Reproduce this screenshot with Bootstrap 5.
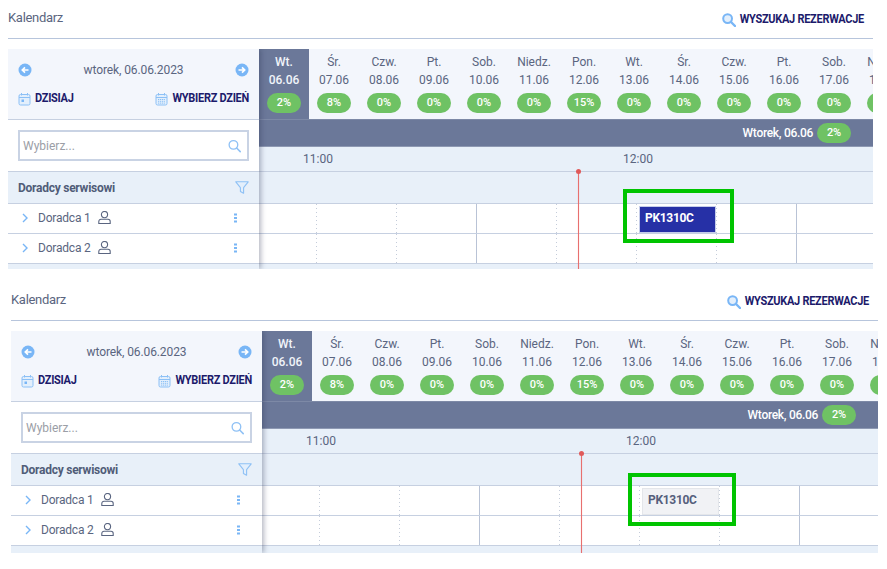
<!DOCTYPE html>
<html lang="pl">
<head>
    <meta charset="UTF-8">
    <meta name="viewport" content="width=device-width, initial-scale=1.0">
    <title>Kalendarz</title>
    <link rel="stylesheet" href="https://cdn.jsdelivr.net/npm/bootstrap@5.3.1/dist/css/bootstrap.min.css">
    <style>
        body { margin: 0; background: #fff; font-family: Roboto, "Liberation Sans", sans-serif; color: #5a6580; overflow: hidden; }

        .cal-panel { position: relative; }
        .panel-a { width: 865px; margin-left: 8px; }
        .panel-b { width: 867px; margin-left: 11px; margin-top: 13px; }
        .panel-a .cal-wrap { height: 220px; }
        .panel-b .cal-wrap { height: 222px; }

        .cal-title { height: 39px; border-bottom: 1px solid #b7c5dc; margin-bottom: 10px; padding: 8px 9px 0 0; }
        .cal-title-text { font-size: 13px; letter-spacing: -.3px; color: #5a6580; }
        .cal-title .caps-link { margin-top: 4px; }
        .caps-link { font-size: 11px; font-weight: 700; color: #1c1a6b; letter-spacing: -.28px; white-space: nowrap; }
        .caps-link span { display: inline-block; transform: scaleY(1.12); }

        .cal-side { width: 251px; flex: none; position: relative; z-index: 2; background: #fff; box-shadow: 2px 0 5px rgba(40, 50, 80, .35); }
        .side-top { height: 71px; background: #f3f6fc; border-bottom: 1px solid #c6d0e1; padding: 12px 10px 0 10px; }
        .side-date { font-size: 12px; letter-spacing: -.1px; }
        .side-links { margin-top: 12px; }
        .side-search { height: 51px; padding: 10px 10px 0 10px; }
        .search-box { height: 31px; border: 2px solid #c9d3e4; padding-right: 6px; }
        .search-box .form-control { font-size: 12px; padding: 0 3px; box-shadow: none; background: transparent; }
        .search-box .form-control::placeholder { color: #9b9ea6; }
        .side-head { height: 33px; background: #e8f0f9; border-top: 1px solid #c6d0e1; border-bottom: 1px solid #c6d0e1; padding: 0 10px; font-size: 12px; letter-spacing: -.25px; font-weight: 700; color: #505c78; }
        .side-row { height: 30px; border-bottom: 1px solid #c6d0e1; padding: 0 22px 2px 14px; font-size: 12px; letter-spacing: -.2px; color: #5a6580; }
        .side-row .row-name { margin-left: 10px; margin-right: 7px; }
        .side-foot { height: 10px; background: #e8f0f9; }

        .cal-main { flex: 1 1 auto; min-width: 0; overflow: hidden; position: relative; background: #fff; }
        .day-strip { height: 70px; background: #f3f6fc; }
        .day-cell { width: 50px; flex: none; padding-top: 4px; font-size: 12px; line-height: 18px; color: #5a6580; text-align: center; }
        .day-cell.is-today { background: #6b7899; color: #f1f4f9; font-weight: 500; }
        .load-pill { display: inline-block; width: 34px; height: 20px; line-height: 20px; border-radius: 10px; background: #6fc264; color: #fff; font-size: 11px; font-weight: 500; text-align: center; }
        .day-cell .load-pill { margin-top: 4px; }
        .day-bar { height: 28px; background: #6b7899; border-top: 1px solid #7d89a6; border-bottom: 1px solid #8e99b3; padding-right: 22px; color: #fff; font-size: 12px; letter-spacing: -.3px; font-weight: 500; gap: 4px; }
        .time-row { height: 24px; background: #e8f0f9; font-size: 12px; line-height: 24px; color: #5a6580; padding-left: 44px; }
        .time-cell { width: 320px; flex: none; }
        .head-row { height: 33px; background: #e8f0f9; border-top: 1px solid #c6d0e1; border-bottom: 1px solid #c6d0e1; }
        .grid-row { height: 30px; border-bottom: 1px solid #c6d0e1; position: relative; }
        .grid-cell { width: 80px; flex: none; background: repeating-linear-gradient(to bottom, #c4ccda 0 1px, transparent 1px 4px) right top / 1px 100% no-repeat; }
        .grid-cell.first { width: 58px; }
        .grid-cell.hour { background: linear-gradient(#b9c3d6, #b9c3d6) right top / 1px 100% no-repeat; }
        .grid-foot { height: 10px; background: #e8f0f9; }

        .now-line { position: absolute; left: 319px; top: 122px; bottom: 0; width: 1px; background: #e8706f; box-shadow: 0 0 1px rgba(232, 112, 111, .6); z-index: 1; }
        .now-line::before { content: ""; position: absolute; left: -2px; top: -2px; width: 5px; height: 5px; border-radius: 50%; background: #e05a5a; }

        .res-chip { position: absolute; left: 380px; top: 2px; width: 77px; height: 27px; padding-left: 5px; font-size: 12px; font-weight: 700; line-height: 23px; letter-spacing: -.3px; }
        .chip-on { background: #2630a6; color: #fff; border: 1px solid #c5cdea; }
        .chip-off { background: #f1f2f5; color: #565f7c; border: 1px solid #e4e6ea; }

        .hl-frame { position: absolute; border: 4px solid #00c400; z-index: 3; }
        .panel-a .hl-frame { left: 615px; top: 189px; width: 111px; height: 54px; }
        .panel-b .hl-frame { left: 617px; top: 191px; width: 108px; height: 53px; }
    </style>
</head>
<body>

<div id="panels"></div>

<script>
const days = [
    ["Wt.", "06.06", 2], ["Śr.", "07.06", 8], ["Czw.", "08.06", 0], ["Pt.", "09.06", 0],
    ["Sob.", "10.06", 0], ["Niedz.", "11.06", 0], ["Pon.", "12.06", 15], ["Wt.", "13.06", 0],
    ["Śr.", "14.06", 0], ["Czw.", "15.06", 0], ["Pt.", "16.06", 0], ["Sob.", "17.06", 0],
    ["Niedz.", "18.06", 0]
];

const icons = {
    left: `<svg width="14" height="14" viewBox="0 0 14 14"><circle cx="7" cy="7" r="6.5" fill="#79b6f6"/><path d="M10.5 7H4.5M7 4.3 4.3 7 7 9.7" fill="none" stroke="#fff" stroke-width="1.7"/></svg>`,
    right: `<svg width="14" height="14" viewBox="0 0 14 14"><circle cx="7" cy="7" r="6.5" fill="#79b6f6"/><path d="M3.5 7H9.5M7 4.3 9.7 7 7 9.7" fill="none" stroke="#fff" stroke-width="1.7"/></svg>`,
    today: `<svg width="13" height="14" viewBox="0 0 13 14"><rect x="1" y="2.5" width="11" height="10.5" rx="1.5" fill="#e3effc" stroke="#8cc0f6"/><path d="M1 5.5h11M3.5 1v2.5M9.5 1v2.5" stroke="#8cc0f6" fill="none"/><rect x="3.5" y="7.5" width="2.5" height="2.5" fill="#79b6f6"/></svg>`,
    month: `<svg width="13" height="14" viewBox="0 0 13 14"><rect x="1" y="2.5" width="11" height="10.5" rx="1.5" fill="#e3effc" stroke="#8cc0f6"/><path d="M1 5.5h11M3.5 1v2.5M9.5 1v2.5" stroke="#8cc0f6" fill="none"/><path d="M3 7.5h7M3 9.3h7M3 11.1h7" stroke="#8cc0f6" stroke-dasharray="1.2 .7" fill="none"/></svg>`,
    search: `<svg width="14" height="14" viewBox="0 0 14 14"><circle cx="5.8" cy="5.8" r="4.6" fill="none" stroke="#8fc1f5" stroke-width="1.4"/><path d="M9.2 9.2 13 13" stroke="#8fc1f5" stroke-width="1.6" stroke-linecap="round"/></svg>`,
    searchBold: `<svg width="14" height="14" viewBox="0 0 14 14"><circle cx="5.6" cy="5.6" r="4.4" fill="#e3effc" stroke="#79b6f6" stroke-width="2"/><path d="M9 9 13 13" stroke="#79b6f6" stroke-width="2.4" stroke-linecap="round"/></svg>`,
    filter: `<svg width="14" height="13" viewBox="0 0 14 13"><path d="M.8.8h12.4L8.6 6.6v5.6L5.4 10.4V6.6Z" fill="#e3effc" stroke="#8fc1f5" stroke-width="1.1" stroke-linejoin="round"/></svg>`,
    chevron: `<svg width="6" height="10" viewBox="0 0 6 10"><path d="M1 1l4 4-4 4" fill="none" stroke="#79b6f6" stroke-width="1.4"/></svg>`,
    user: `<svg width="13" height="13" viewBox="0 0 13 13"><circle cx="6.5" cy="3.6" r="3.1" fill="none" stroke="#5a6580" stroke-width="1.1"/><path d="M3 8.2h7a2.2 2.2 0 0 1 2.2 2.2v2.1H.8v-2.1A2.2 2.2 0 0 1 3 8.2Z" fill="none" stroke="#5a6580" stroke-width="1.1"/></svg>`,
    dots: `<svg width="3" height="10" viewBox="0 0 3 10"><path d="M0 .5h3v2H0zM0 4h3v2H0zM0 7.5h3v2H0z" fill="#79b6f6"/></svg>`
};

function pill(value) {
    return `<span class="load-pill">${value}%</span>`;
}

function gridRow(chip) {
    const cells = ["first", "", "hour", "", "", "", "hour", "", ""]
        .map(kind => `<div class="grid-cell ${kind}"></div>`).join("");
    return `<div class="grid-row d-flex">${cells}${chip}</div>`;
}

function sideRow(name) {
    return `
        <div class="side-row d-flex align-items-center">
            ${icons.chevron}
            <span class="row-name">${name}</span>
            ${icons.user}
            <span class="ms-auto d-flex">${icons.dots}</span>
        </div>`;
}

function panel(variant, chipClass) {
    const dayCells = days.map((d, i) => `
        <div class="day-cell ${i === 0 ? "is-today" : ""}">
            <div>${d[0]}</div>
            <div>${d[1]}</div>
            ${pill(d[2])}
        </div>`).join("");

    return `
    <section class="cal-panel ${variant}">
        <div class="cal-title d-flex justify-content-between align-items-start">
            <span class="cal-title-text">Kalendarz</span>
            <a class="caps-link d-flex align-items-center gap-1 text-decoration-none" href="#">${icons.searchBold}<span>WYSZUKAJ REZERWACJE</span></a>
        </div>
        <div class="cal-wrap d-flex overflow-hidden">
            <div class="cal-side">
                <div class="side-top">
                    <div class="d-flex justify-content-between align-items-center">
                        ${icons.left}<span class="side-date">wtorek, 06.06.2023</span>${icons.right}
                    </div>
                    <div class="side-links d-flex justify-content-between">
                        <a class="caps-link d-flex align-items-center gap-1 text-decoration-none" href="#">${icons.today}<span>DZISIAJ</span></a>
                        <a class="caps-link d-flex align-items-center gap-1 text-decoration-none" href="#">${icons.month}<span>WYBIERZ DZIEŃ</span></a>
                    </div>
                </div>
                <div class="side-search">
                    <div class="search-box d-flex align-items-center">
                        <input class="form-control border-0" type="text" placeholder="Wybierz...">
                        ${icons.search}
                    </div>
                </div>
                <div class="side-head d-flex justify-content-between align-items-center">
                    <span>Doradcy serwisowi</span>${icons.filter}
                </div>
                ${sideRow("Doradca 1")}
                ${sideRow("Doradca 2")}
                <div class="side-foot"></div>
            </div>
            <div class="cal-main">
                <div class="day-strip d-flex">${dayCells}</div>
                <div class="day-bar d-flex justify-content-end align-items-center">
                    <span>Wtorek, 06.06</span>${pill(2)}
                </div>
                <div class="time-row d-flex">
                    <div class="time-cell">11:00</div>
                    <div class="time-cell">12:00</div>
                </div>
                <div class="head-row"></div>
                ${gridRow(`<div class="res-chip ${chipClass}">PK1310C</div>`)}
                ${gridRow("")}
                <div class="grid-foot"></div>
                <div class="now-line"></div>
            </div>
        </div>
        <div class="hl-frame"></div>
    </section>`;
}

document.getElementById("panels").innerHTML =
    panel("panel-a", "chip-on") + panel("panel-b", "chip-off");
</script>

<script src="https://cdn.jsdelivr.net/npm/bootstrap@5.3.1/dist/js/bootstrap.bundle.min.js"></script>
</body>
</html>
